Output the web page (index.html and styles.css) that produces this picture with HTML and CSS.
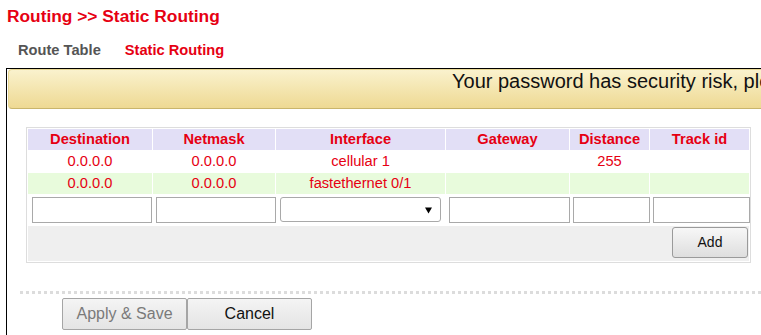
FILE: index.html
```html
<!DOCTYPE html>
<html>
<head>
<meta charset="utf-8">
<link rel="stylesheet" href="styles.css">
</head>
<body>
<div class="title">Routing &gt;&gt; Static Routing</div>
<div class="tabs"><span class="tab">Route Table</span><span class="tab active">Static Routing</span></div>
<div class="frame">
  <div class="banner"><span class="banner-text">Your password has security risk, please change it as soon as possible.</span></div>
  <div class="tablebox">
    <table class="routes">
      <colgroup>
        <col class="c1"><col class="c2"><col class="c3"><col class="c4"><col class="c5"><col class="c6">
      </colgroup>
      <thead>
        <tr><th>Destination</th><th>Netmask</th><th>Interface</th><th>Gateway</th><th>Distance</th><th>Track id</th></tr>
      </thead>
      <tbody>
        <tr class="odd"><td>0.0.0.0</td><td>0.0.0.0</td><td>cellular 1</td><td></td><td>255</td><td></td></tr>
        <tr class="even"><td>0.0.0.0</td><td>0.0.0.0</td><td>fastethernet 0/1</td><td></td><td></td><td></td></tr>
        <tr class="edit">
          <td><input type="text" class="field"></td>
          <td><input type="text" class="field"></td>
          <td><select class="pick"><option></option></select></td>
          <td><input type="text" class="field"></td>
          <td><input type="text" class="field"></td>
          <td><input type="text" class="field"></td>
        </tr>
        <tr class="addrow"><td colspan="6"><button class="btn add">Add</button></td></tr>
      </tbody>
    </table>
  </div>
  <div class="sep"></div>
  <div class="actions">
    <button class="btn big" disabled>Apply &amp; Save</button>
    <button class="btn big">Cancel</button>
  </div>
</div>
</body>
</html>
```

FILE: styles.css
```css
html, body {
  margin: 0;
  padding: 0;
  overflow: hidden;
  background: #fff;
  font-family: "Liberation Sans", Arial, sans-serif;
}

.title {
  padding: 6px 0 0 7px;
  line-height: 20px;
  font-size: 17.33px;
  font-weight: bold;
  color: #e60012;
}

.tabs {
  margin-top: 16px;
  padding-left: 6px;
  line-height: 17px;
  font-size: 14.67px;
  font-weight: bold;
  color: #555;
}

.tab {
  padding: 0 12px;
}

.tab.active {
  color: #e60012;
}

.frame {
  margin: 9px 0 0 6px;
  border-left: 1px solid #000;
  border-top: 1px solid #000;
  padding: 0 0 20px 1px;
}

.banner {
  height: 40px;
  box-sizing: border-box;
  border: 1px solid #e8d792;
  border-bottom-color: #c9b56c;
  border-right: none;
  border-radius: 4px 0 0 4px;
  background: linear-gradient(#faf2cd, #eed993);
  white-space: nowrap;
  overflow: hidden;
  padding: 0 0 0 443px;
  font-size: 20px;
  line-height: 23px;
  color: #111;
}

.tablebox {
  margin: 18px 0 0 18px;
  width: 723px;
  border: 1px solid #ddd;
}

.routes {
  table-layout: fixed;
  width: 723px;
  border-collapse: separate;
  border-spacing: 1px;
  font-size: 14.67px;
  color: #e60012;
}

.c1 { width: 124px; }
.c2 { width: 122px; }
.c3 { width: 169px; }
.c4 { width: 123px; }
.c5 { width: 79px; }
.c6 { width: 99px; }

.routes th,
.routes td {
  padding: 2px 0;
  line-height: 17px;
  text-align: center;
  vertical-align: middle;
  white-space: nowrap;
}

.routes th {
  background: #e2dff6;
  font-weight: bold;
}

.odd td {
  background: #fff;
}

.even td {
  background: #e8fbdc;
}

.edit td {
  background: #fff;
  padding: 2px 0 2px 3px;
  text-align: left;
  box-shadow: inset 0 0 0 0 #eee;
}

.edit td:first-child {
  padding-left: 4px;
}

.field {
  display: block;
  box-sizing: border-box;
  width: calc(100% + 1px);
  height: 26px;
  margin: 0;
  border: 1px solid #a9a9a9;
  padding: 0 3px;
  background: #fff;
  font-family: "Liberation Sans", Arial, sans-serif;
  font-size: 14px;
}

.edit td:first-child .field {
  width: 100%;
}

.pick {
  display: block;
  box-sizing: border-box;
  width: 161px;
  height: 25px;
  margin: 0 0 1px 1px;
  border: 1px solid #a9a9a9;
  border-radius: 3px;
  -webkit-appearance: none;
  appearance: none;
  background: #fff url("data:image/svg+xml,%3Csvg xmlns='http://www.w3.org/2000/svg' width='7' height='7'%3E%3Cpath d='M0 0.5H7L3.5 6.5Z' fill='%23000'/%3E%3C/svg%3E") no-repeat right 8px top 9px;
  font-family: "Liberation Sans", Arial, sans-serif;
  font-size: 14px;
}

.addrow td {
  background: #efefef;
  padding: 1px 1px 3px 0;
  text-align: right;
  line-height: 0;
}

.btn {
  box-sizing: border-box;
  border: 1px solid #9a9a9a;
  border-radius: 3px;
  background: linear-gradient(#f7f7f7, #dedede);
  font-family: "Liberation Sans", Arial, sans-serif;
  color: #111;
  padding: 0;
  margin: 0;
}

.add {
  width: 76px;
  height: 31px;
  font-size: 14px;
  line-height: 29px;
}

.sep {
  margin: 28px 0 0 12px;
  border-top: 3px dotted #dcdcdc;
}

.actions {
  display: flex;
  margin-top: 4px;
  padding-left: 54px;
}

.big {
  width: 125px;
  height: 32px;
  font-size: 16px;
  border-radius: 2px;
  border-color: #a5a5a5;
  background: linear-gradient(#f4f4f4, #e4e4e4);
}

.big[disabled] {
  color: #7a7a7a;
}
```
